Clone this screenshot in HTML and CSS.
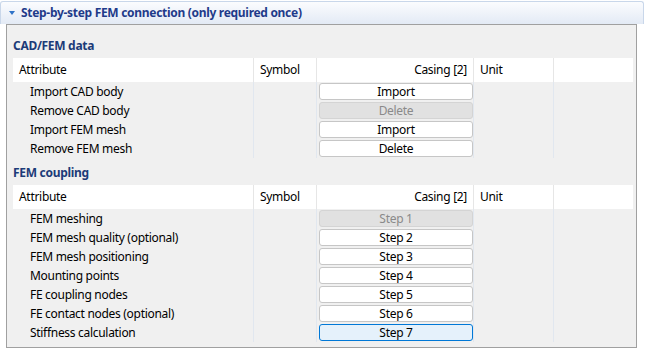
FILE: index.html
```html
<!DOCTYPE html>
<html lang="en">
<head>
  <meta charset="UTF-8" />
  <title>FEM connection</title>
  <link rel="stylesheet" href="styles.css">
</head>
<body>
  <div class="expander">
    <span class="twisty"></span>
    <span class="expander-title">Step-by-step FEM connection (only required once)</span>
  </div>
  <div class="panel">
    <div class="group-title first">CAD/FEM data</div>
    <div class="grid">
      <div class="hcell">Attribute</div>
      <div class="hcell">Symbol</div>
      <div class="hcell right">Casing [2]</div>
      <div class="hcell">Unit</div>
      <div class="hcell"></div>

      <div class="cell name">Import CAD body</div><div class="cell"></div>
      <div class="cell btn-cell"><button class="btn">Import</button></div><div class="cell"></div><div class="cell"></div>
      <div class="cell name">Remove CAD body</div><div class="cell"></div>
      <div class="cell btn-cell"><button class="btn" disabled>Delete</button></div><div class="cell"></div><div class="cell"></div>
      <div class="cell name">Import FEM mesh</div><div class="cell"></div>
      <div class="cell btn-cell"><button class="btn">Import</button></div><div class="cell"></div><div class="cell"></div>
      <div class="cell name">Remove FEM mesh</div><div class="cell"></div>
      <div class="cell btn-cell"><button class="btn">Delete</button></div><div class="cell"></div><div class="cell"></div>
    </div>

    <div class="group-title">FEM coupling</div>
    <div class="grid">
      <div class="hcell">Attribute</div>
      <div class="hcell">Symbol</div>
      <div class="hcell right">Casing [2]</div>
      <div class="hcell">Unit</div>
      <div class="hcell"></div>

      <div class="cell name">FEM meshing</div><div class="cell"></div>
      <div class="cell btn-cell"><button class="btn" disabled>Step 1</button></div><div class="cell"></div><div class="cell"></div>
      <div class="cell name">FEM mesh quality (optional)</div><div class="cell"></div>
      <div class="cell btn-cell"><button class="btn">Step 2</button></div><div class="cell"></div><div class="cell"></div>
      <div class="cell name">FEM mesh positioning</div><div class="cell"></div>
      <div class="cell btn-cell"><button class="btn">Step 3</button></div><div class="cell"></div><div class="cell"></div>
      <div class="cell name">Mounting points</div><div class="cell"></div>
      <div class="cell btn-cell"><button class="btn">Step 4</button></div><div class="cell"></div><div class="cell"></div>
      <div class="cell name">FE coupling nodes</div><div class="cell"></div>
      <div class="cell btn-cell"><button class="btn">Step 5</button></div><div class="cell"></div><div class="cell"></div>
      <div class="cell name">FE contact nodes (optional)</div><div class="cell"></div>
      <div class="cell btn-cell"><button class="btn">Step 6</button></div><div class="cell"></div><div class="cell"></div>
      <div class="cell name">Stiffness calculation</div><div class="cell"></div>
      <div class="cell btn-cell"><button class="btn focused">Step 7</button></div><div class="cell"></div><div class="cell"></div>
    </div>
  </div>
</body>
</html>
```

FILE: styles.css
```css
body {
  font-family: 'Noto Sans', sans-serif;
  font-size: 12px;
  letter-spacing: -0.3px;
  color: #000;
  background: #fff;
  margin: 0;
  padding: 1px 2px 0 0;
}

.expander {
  height: 22px;
  display: flex;
  align-items: center;
  border: 1px solid #c9d7ea;
  border-bottom: none;
  border-radius: 3px 3px 0 0;
  background: linear-gradient(#fbfcfe, #e3eaf5);
}

.twisty {
  width: 0;
  height: 0;
  margin: 0 6px 0 8px;
  border-left: 3px solid transparent;
  border-right: 3px solid transparent;
  border-top: 4px solid #2f73c8;
}

.expander-title {
  font-weight: bold;
  color: #1f3b8a;
  margin-top: -1px;
}

.panel {
  margin: 0 7px 0 6px;
  height: 324px;
  box-sizing: border-box;
  border: 1px solid #a0a0a0;
  background: #f0f0f0;
  padding: 0 3px 0 6px;
}

.group-title {
  font-weight: bold;
  color: #1c3b78;
  line-height: 17px;
  padding: 6px 0 4px 0;
}

.group-title.first {
  padding-top: 12px;
}

.grid {
  display: grid;
  grid-template-columns: 240px 63px 157px 80px 80px;
  grid-template-rows: 24px;
  grid-auto-rows: 19px;
}

.hcell {
  background: #fff;
  line-height: 24px;
  padding: 0 6px;
  border-left: 1px solid #e6e6e6;
}

.hcell:first-child {
  border-left: none;
}

.hcell.right {
  text-align: right;
}

.cell {
  border-left: 1px solid #e1e7ef;
  line-height: 19px;
}

.cell.name {
  border-left: none;
  padding-left: 17px;
}

.btn-cell {
  padding: 1px 0 1px 2px;
}

.btn {
  display: block;
  width: 154px;
  height: 17px;
  padding: 0;
  font-family: inherit;
  font-size: 12px;
  letter-spacing: inherit;
  line-height: 15px;
  color: #000;
  background: #fff;
  border: 1px solid #c6c6c6;
  border-radius: 3px;
}

.btn:disabled {
  background: #e1e1e1;
  border-color: #d4d4d4;
  color: #8a8a8a;
}

.btn.focused {
  background: #e5f1fb;
  border-color: #0078d7;
}
```
